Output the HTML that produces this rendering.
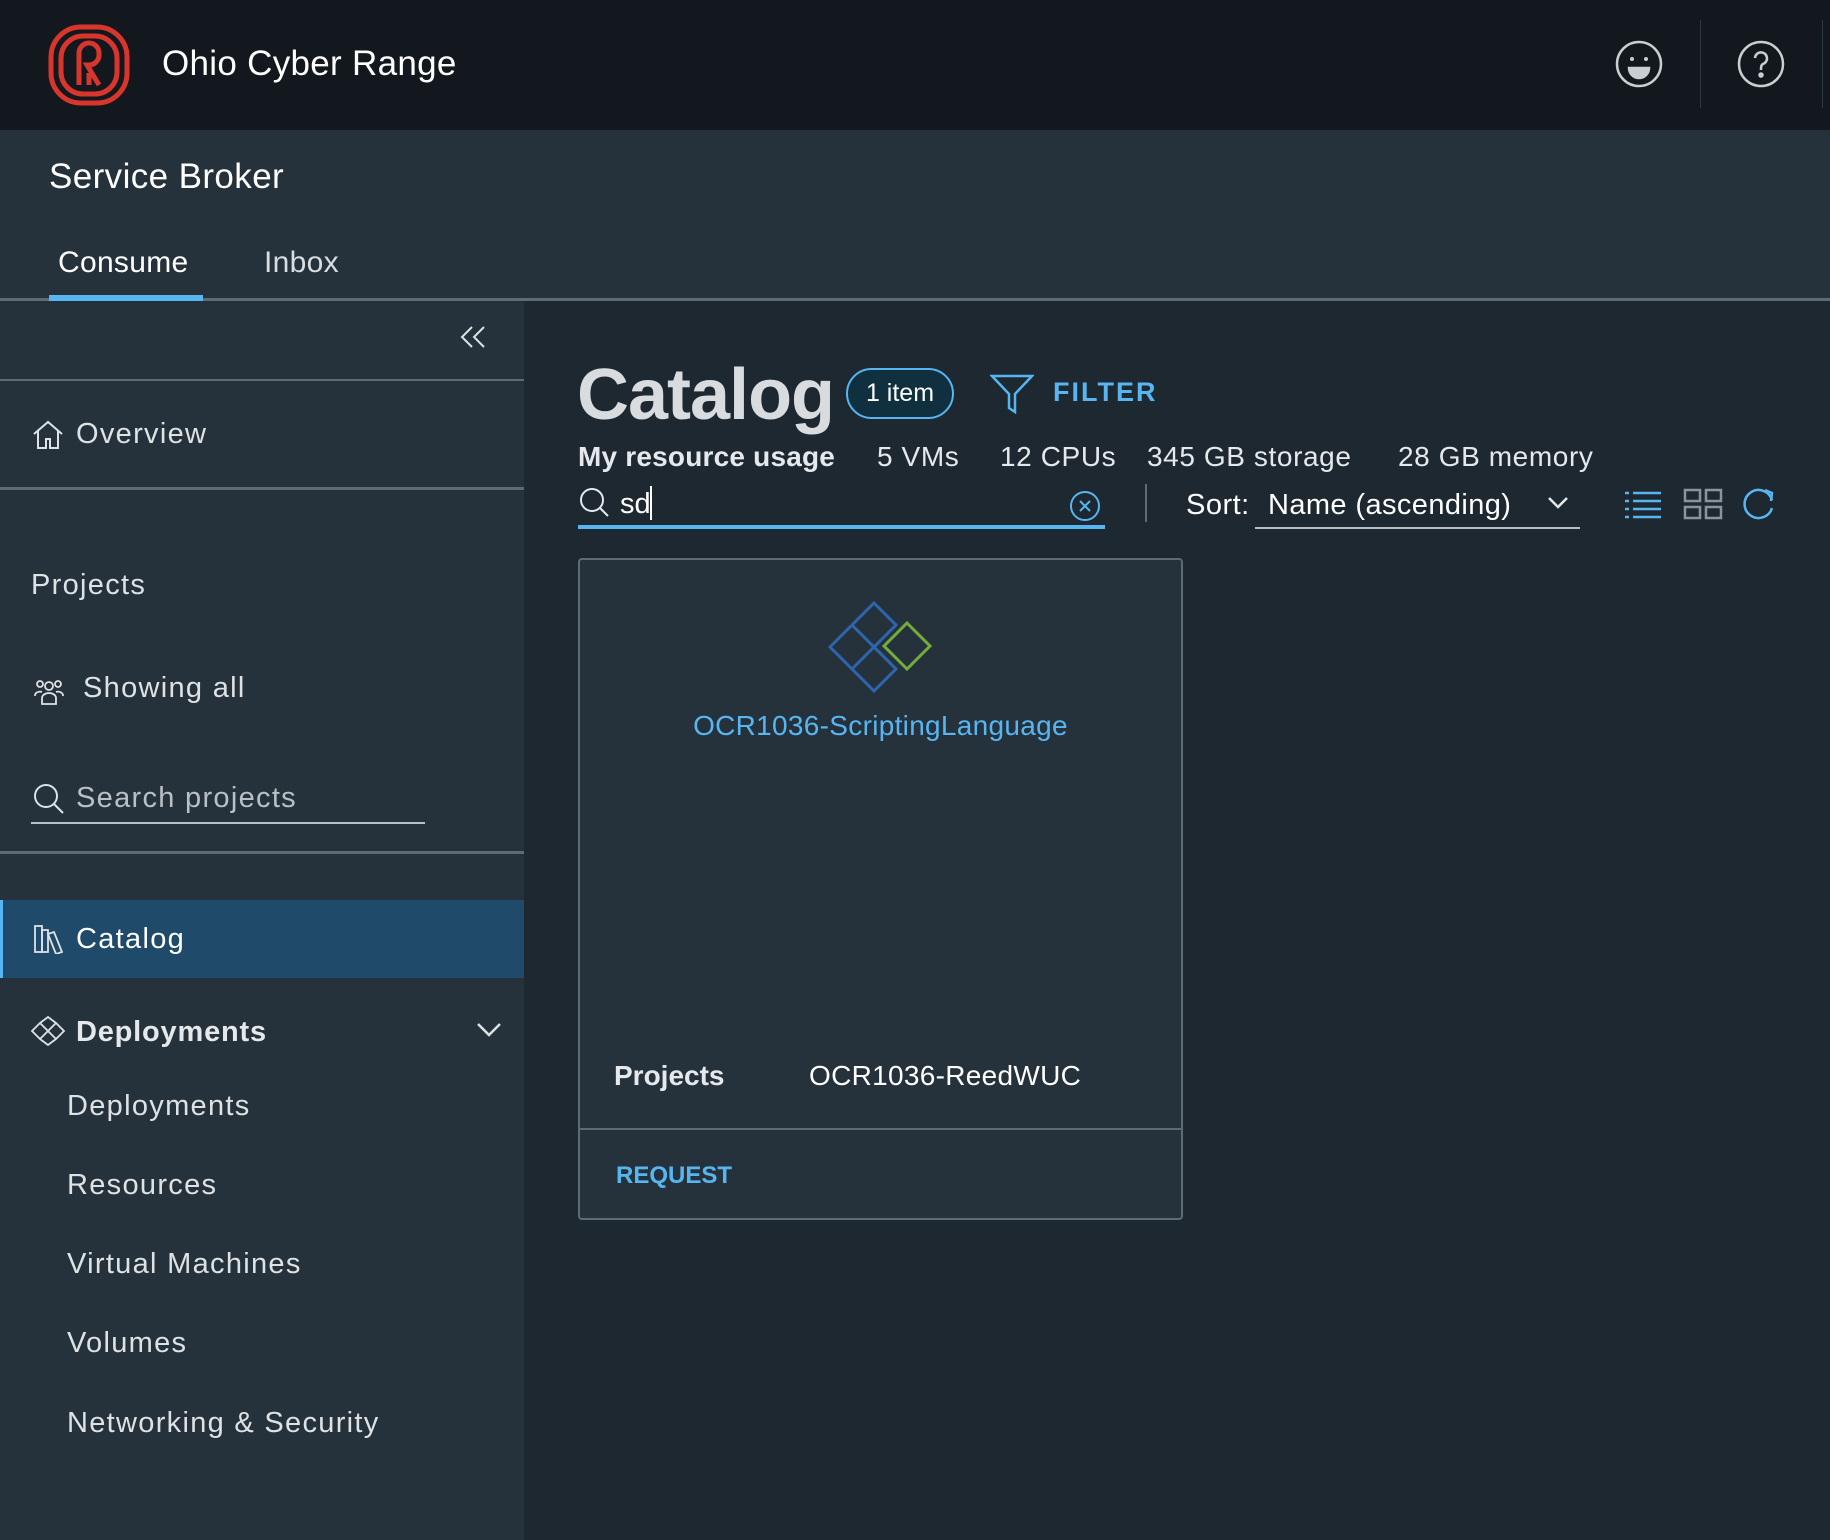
<!DOCTYPE html>
<html><head><meta charset="utf-8"><style>
*{margin:0;padding:0;box-sizing:border-box}
body{width:1830px;height:1540px;background:#1d2830;font-family:"Liberation Sans",sans-serif;color:#e6e9eb;position:relative;overflow:hidden}
.a{position:absolute;white-space:nowrap}
.hdr{position:absolute;left:0;top:0;width:1830px;height:130px;background:#12181d}
.sub{position:absolute;left:0;top:130px;width:1830px;height:170px;background:#25323b}
.side{position:absolute;left:0;top:301px;width:524px;height:1239px;background:#25323b}
.hl{position:absolute;left:0;width:524px;background:#5f6b74}
.si{font-size:29px;color:#dde2e5;letter-spacing:1.3px}
.r{font-size:28px;letter-spacing:0.6px}
</style></head><body>
<div class="hdr"></div>
<svg class="a" style="left:47px;top:23px" width="84" height="84" viewBox="0 0 84 84" fill="none" stroke="#d8362c" stroke-width="5">
<rect x="4" y="4" width="76" height="76" rx="30"/>
<rect x="14" y="13" width="56" height="58" rx="22"/>
<path d="M32 62V30a10 10 0 0 1 20 0v2a10 10 0 0 1-10 10h-2l12 20"/>
<path d="M42 62V50"/>
</svg>
<div class="a" style="left:162px;top:44px;font-size:35px;color:#fff;letter-spacing:0.3px">Ohio Cyber Range</div>
<svg class="a" style="left:1615px;top:40px" width="48" height="48" viewBox="0 0 48 48" fill="none" stroke="#c9ced2" stroke-width="2.5"><circle cx="24" cy="24" r="22"/><circle cx="17" cy="19" r="2" fill="#c9ced2" stroke="none"/><circle cx="31" cy="19" r="2" fill="#c9ced2" stroke="none"/><path d="M14 28h20a10 10 0 0 1-20 0z" fill="#c9ced2"/></svg>
<div class="a" style="left:1700px;top:20px;width:1px;height:88px;background:#2e3840"></div>
<svg class="a" style="left:1737px;top:40px" width="48" height="48" viewBox="0 0 48 48" fill="none" stroke="#c9ced2" stroke-width="2.5"><circle cx="24" cy="24" r="22"/><path d="M18 18a6 6 0 1 1 8 6c-2 1-2 3-2 6"/><circle cx="24" cy="35" r="1.5" fill="#c9ced2"/></svg>
<div class="a" style="left:1822px;top:20px;width:1px;height:88px;background:#2e3840"></div>

<div class="sub"></div>
<div class="a" style="left:49px;top:157px;font-size:35px;color:#fff;letter-spacing:0.4px">Service Broker</div>
<div class="a" style="left:58px;top:246px;font-size:30px;color:#fff;letter-spacing:0.3px">Consume</div>
<div class="a" style="left:264px;top:246px;font-size:30px;color:#d8dde0;letter-spacing:0.3px">Inbox</div>
<div class="a" style="left:0;top:298px;width:1830px;height:3px;background:#5f6b74"></div>
<div class="a" style="left:49px;top:295px;width:154px;height:6px;background:#57b6f2"></div>

<div class="side"></div>
<svg class="a" style="left:460px;top:325px" width="26" height="24" viewBox="0 0 26 24" fill="none" stroke="#dde2e5" stroke-width="2"><path d="M12 2L2 12l10 10M24 2L14 12l10 10"/></svg>
<div class="hl" style="top:379px;height:2px"></div>
<svg class="a" style="left:32px;top:420px" width="32" height="30" viewBox="0 0 32 30" fill="none" stroke="#dde2e5" stroke-width="2"><path d="M2 14L16 2l14 12M6 11v17h8v-9h4v9h8V11"/></svg>
<div class="a si" style="left:76px;top:418px">Overview</div>
<div class="hl" style="top:487px;height:3px"></div>
<div class="a si" style="left:31px;top:569px">Projects</div>
<svg class="a" style="left:33px;top:676px" width="32" height="30" viewBox="0 0 32 30" fill="none" stroke="#dde2e5" stroke-width="1.8"><circle cx="16" cy="10" r="4"/><circle cx="7" cy="8" r="3"/><circle cx="25" cy="8" r="3"/><path d="M9 28v-6a7 5 0 0 1 14 0v6zM2 20a5 4 0 0 1 7-4M30 20a5 4 0 0 0-7-4"/></svg>
<div class="a si" style="left:83px;top:672px">Showing all</div>
<svg class="a" style="left:32px;top:782px" width="34" height="34" viewBox="0 0 34 34" fill="none" stroke="#dde2e5" stroke-width="2"><circle cx="14" cy="14" r="11"/><path d="M22 22l9 9"/></svg>
<div class="a si" style="left:76px;top:782px;color:#b9c0c5">Search projects</div>
<div class="a" style="left:31px;top:822px;width:394px;height:2px;background:#b9c0c5"></div>
<div class="hl" style="top:851px;height:3px"></div>
<div class="a" style="left:0;top:900px;width:524px;height:78px;background:#1f4a6a;border-left:3px solid #57b6f2"></div>
<svg class="a" style="left:33px;top:924px" width="32" height="30" viewBox="0 0 32 30" fill="none" stroke="#dde2e5" stroke-width="1.8"><rect x="2" y="2" width="7" height="26"/><rect x="9" y="6" width="6" height="22"/><path d="M15 10l6-2 8 20-6 2z"/></svg>
<div class="a si" style="left:76px;top:923px;color:#fff">Catalog</div>
<svg class="a" style="left:30px;top:1016px" width="36" height="30" viewBox="0 0 36 30" fill="none" stroke="#dde2e5" stroke-width="1.8"><path d="M2 15l8-8 8 8-8 8zM10 7l8-6 8 6-8 8M10 23l8 6 8-6M18 15l8-8 8 8-8 8z"/></svg>
<div class="a si" style="left:76px;top:1016px;font-weight:bold;color:#e6e9eb;letter-spacing:0.8px">Deployments</div>
<svg class="a" style="left:476px;top:1022px" width="26" height="16" viewBox="0 0 26 16" fill="none" stroke="#dde2e5" stroke-width="2.5"><path d="M2 2l11 11L24 2"/></svg>
<div class="a si" style="left:67px;top:1090px">Deployments</div>
<div class="a si" style="left:67px;top:1169px">Resources</div>
<div class="a si" style="left:67px;top:1248px">Virtual Machines</div>
<div class="a si" style="left:67px;top:1327px">Volumes</div>
<div class="a si" style="left:67px;top:1407px">Networking &amp; Security</div>

<div class="a" style="left:577px;top:354px;font-size:72px;color:#d8dcdf;font-weight:bold;letter-spacing:-1px">Catalog</div>
<div class="a" style="left:846px;top:368px;width:108px;height:51px;border:2px solid #57b6f2;border-radius:26px;background:#10303f;font-size:25px;color:#fff;text-align:center;line-height:47px">1 item</div>
<svg class="a" style="left:990px;top:374px" width="44" height="40" viewBox="0 0 44 40" fill="none" stroke="#57b6f2" stroke-width="2.5"><path d="M2 2h40L25 20v18l-6-4V20z"/></svg>
<div class="a" style="left:1053px;top:377px;font-size:27px;color:#57b6f2;font-weight:bold;letter-spacing:2px">FILTER</div>
<div class="a r" style="left:578px;top:441px;color:#e6e9eb;letter-spacing:0.2px"><b>My resource usage</b></div>
<div class="a r" style="left:877px;top:441px">5 VMs</div>
<div class="a r" style="left:1000px;top:441px">12 CPUs</div>
<div class="a r" style="left:1147px;top:441px">345 GB storage</div>
<div class="a r" style="left:1398px;top:441px">28 GB memory</div>
<svg class="a" style="left:578px;top:486px" width="34" height="34" viewBox="0 0 34 34" fill="none" stroke="#e6e9eb" stroke-width="2"><circle cx="14" cy="14" r="11"/><path d="M22 22l8 8"/></svg>
<div class="a" style="left:620px;top:488px;font-size:29px;color:#fff">sd</div>
<div class="a" style="left:650px;top:486px;width:2px;height:34px;background:#fff"></div>
<svg class="a" style="left:1069px;top:490px" width="32" height="32" viewBox="0 0 32 32" fill="none" stroke="#57b6f2" stroke-width="2"><circle cx="16" cy="16" r="14"/><path d="M11 11l10 10M21 11L11 21"/></svg>
<div class="a" style="left:578px;top:525px;width:527px;height:4px;background:#57b6f2"></div>
<div class="a" style="left:1145px;top:484px;width:2px;height:38px;background:#5f6b74"></div>
<div class="a" style="left:1186px;top:489px;font-size:29px;color:#fff;letter-spacing:0.5px">Sort:</div>
<div class="a" style="left:1268px;top:489px;font-size:29px;color:#fff;letter-spacing:0.4px">Name (ascending)</div>
<svg class="a" style="left:1547px;top:496px" width="22" height="14" viewBox="0 0 22 14" fill="none" stroke="#e6e9eb" stroke-width="2.5"><path d="M2 2l9 9 9-9"/></svg>
<div class="a" style="left:1255px;top:527px;width:325px;height:2px;background:#b9c0c5"></div>
<svg class="a" style="left:1624px;top:490px" width="38" height="30" viewBox="0 0 38 30" fill="none" stroke="#57b6f2" stroke-width="2.5"><path d="M1 3h4M9 3h28M1 11h4M9 11h28M1 19h4M9 19h28M1 27h4M9 27h28"/></svg>
<svg class="a" style="left:1683px;top:488px" width="40" height="32" viewBox="0 0 40 32" fill="none" stroke="#8a949b" stroke-width="2.5"><rect x="2" y="2" width="15" height="11"/><rect x="23" y="2" width="15" height="11"/><rect x="2" y="19" width="15" height="11"/><rect x="23" y="19" width="15" height="11"/></svg>
<svg class="a" style="left:1741px;top:486px" width="36" height="36" viewBox="0 0 36 36" fill="none" stroke="#57b6f2" stroke-width="2.5"><path d="M31 14A14 14 0 1 0 31 22"/><path d="M24 4l7 3-1 8"/></svg>

<div class="a" style="left:578px;top:558px;width:605px;height:662px;background:#25323b;border:2px solid #5f6b74;border-radius:4px"></div>
<svg class="a" style="left:826px;top:598px" width="110" height="96" viewBox="826 598 110 96" fill="none" stroke-width="3"><path stroke="#2f64ae" d="M874 603l22 22-22 22-22-22zM852 625l22 22-22 22-22-22zM874 647l22 22-22 22-22-22z"/><path stroke="#73ac3b" d="M907 623l23 23-23 23-23-23z"/></svg>
<div class="a" style="left:578px;top:710px;width:605px;text-align:center;font-size:28px;color:#57b6f2;letter-spacing:0.3px">OCR1036-ScriptingLanguage</div>
<div class="a" style="left:614px;top:1060px;font-size:28px;font-weight:bold;color:#e6e9eb">Projects</div>
<div class="a" style="left:809px;top:1060px;font-size:28px;color:#fff;letter-spacing:0.3px">OCR1036-ReedWUC</div>
<div class="a" style="left:580px;top:1128px;width:601px;height:2px;background:#5f6b74"></div>
<div class="a" style="left:616px;top:1162px;font-size:24px;font-weight:bold;color:#57b6f2">REQUEST</div>
</body></html>
